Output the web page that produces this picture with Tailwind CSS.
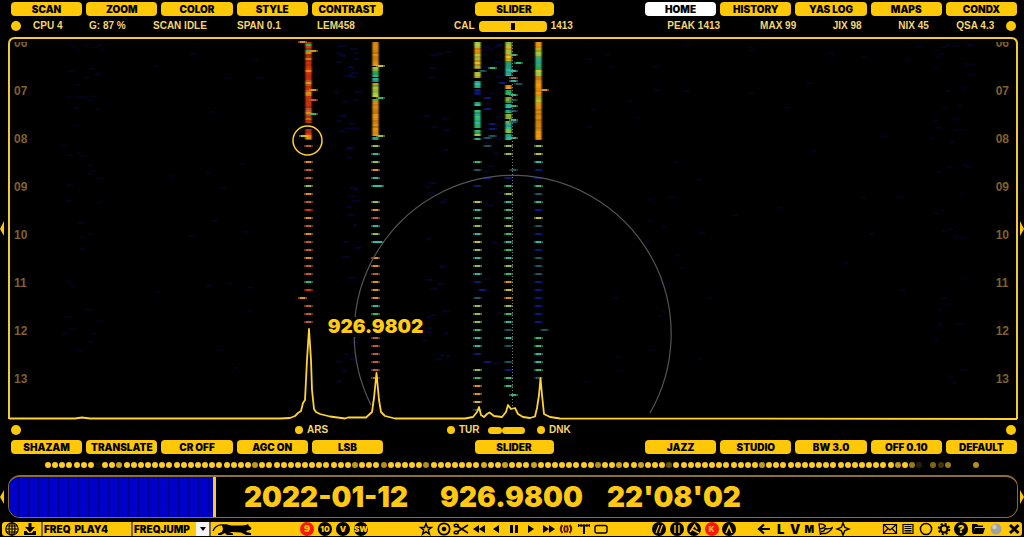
<!DOCTYPE html>
<html lang="en">
<head>
  <meta charset="UTF-8" />
  <meta name="viewport" content="width=device-width, initial-scale=1.0" />
  <title>SDR Spectrum</title>
  <script src="https://cdn.jsdelivr.net/npm/@tailwindcss/browser@4"></script>
</head>
<body class="bg-black min-h-screen flex flex-col overflow-x-hidden font-['Liberation_Sans',sans-serif] text-[#ffcc11]">

  <!-- top buttons -->
  <nav class="flex justify-between pt-[2px] pl-[11px] pr-[7px] text-black font-['Inter',sans-serif] font-black text-[10px] leading-[14px]">
    <div class="grid grid-cols-5 gap-[4px] w-[372px]">
      <button class="h-[14px] rounded bg-[#ffc806]">SCAN</button>
      <button class="h-[14px] rounded bg-[#ffc806]">ZOOM</button>
      <button class="h-[14px] rounded bg-[#ffc806]">COLOR</button>
      <button class="h-[14px] rounded bg-[#ffc806]">STYLE</button>
      <button class="h-[14px] rounded bg-[#ffc806]">CONTRAST</button>
    </div>
    <button class="w-[79px] h-[14px] rounded bg-[#ffc806]">SLIDER</button>
    <div class="grid grid-cols-5 gap-[4px] w-[372px]">
      <button class="h-[14px] rounded bg-white">HOME</button>
      <button class="h-[14px] rounded bg-[#ffc806]">HISTORY</button>
      <button class="h-[14px] rounded bg-[#ffc806]">YAS LOG</button>
      <button class="h-[14px] rounded bg-[#ffc806]">MAPS</button>
      <button class="h-[14px] rounded bg-[#ffc806]">CONDX</button>
    </div>
  </nav>

  <!-- status line -->
  <div class="flex justify-between items-center h-[20px] pl-[11px] pr-[8px] font-bold text-[10px] leading-[12px] text-[#f5d76b]">
    <div class="flex items-center w-[370px]">
      <span class="size-[10px] rounded-full bg-[#ffc806] mr-[12px]"></span>
      <span class="w-[56px]">CPU 4</span>
      <span class="w-[64px]">G: 87 %</span>
      <span class="w-[84px]">SCAN IDLE</span>
      <span class="w-[80px]">SPAN 0.1</span>
      <span>LEM458</span>
    </div>
    <div class="flex items-center gap-[4px]">
      <span>CAL</span>
      <span class="w-[68px] h-[11px] rounded bg-[#ffc806] flex items-center justify-center"><span class="w-[4px] h-[7px] bg-black"></span></span>
      <span>1413</span>
    </div>
    <div class="flex items-center justify-end w-[370px] text-right">
      <span class="w-[76px]">PEAK 1413</span>
      <span class="w-[78px]">MAX 99</span>
      <span class="w-[67px]">JIX 98</span>
      <span class="w-[69px]">NIX 45</span>
      <span class="w-[67px]">QSA 4.3</span>
      <span class="size-[10px] rounded-full bg-[#ffc806] ml-[12px]"></span>
    </div>
  </div>

  <!-- waterfall + spectrum -->
  <main class="relative flex-1 min-h-[386px]">
    <svg id="waterfall" class="absolute inset-0 w-full h-full" viewBox="0 36 1024 386" preserveAspectRatio="none" fill="none">
      <defs>
        <linearGradient id="edge">
          <stop offset="0" stop-color="#000" />
          <stop offset=".3" stop-color="#000" stop-opacity="0" />
          <stop offset=".7" stop-color="#000" stop-opacity="0" />
          <stop offset="1" stop-color="#000" />
        </linearGradient>
      </defs>
      <g id="signal"></g>
      <path d="M512.5 42V408" stroke="#777" stroke-dasharray="1 2" />
      <path d="M371 405A158.500 158.500 0 1 1 650 413" stroke="#555" stroke-width="1.200" />
      <circle cx="307.500" cy="140.500" r="14.500" stroke="#ffd02e" stroke-width="1.500" />
      <path d="M9 419V44q0-6 6-6H1011q6 0 6 6V419" stroke="#f5cb32" stroke-width="2" />
      <path d="M9 418.500H75L82 417.500L90 418.500H280L290 418L295 416L298 413L301 411L303 403L305 400L307 360L309 329L311 360L312 390L314 409L316 412L320 414L330 416.500L345 418.500L348 417.500L366 417.500L372 412L374 398L376.500 373L379 400L381 412L385 416L395 418.500H465L473 417L477 412L479 407L481 415L484 417L487 414L489.500 412.500L494 416L502 417L506 412L508 405L511 409L515 408L518 414L523 417L530 418L535 416.500L537 408L539 395L540.500 378L542 395L544 414L550 417L560 418.500L1017 419" stroke="#ffd42e" stroke-width="1.800" stroke-linejoin="round" />
      <path d="M4 221V236L0 229ZM1020 221V236L1024 229Z" fill="#ffc806" />
    </svg>
    <div class="absolute top-[6px] left-[14px] overflow-hidden">
      <ul class="-mt-[6px] text-[#806128] font-bold text-[12px] leading-[14px]">
        <li class="h-[48px]">06</li><li class="h-[48px]">07</li><li class="h-[48px]">08</li><li class="h-[48px]">09</li>
        <li class="h-[48px]">10</li><li class="h-[48px]">11</li><li class="h-[48px]">12</li><li class="h-[48px]">13</li>
      </ul>
    </div>
    <div class="absolute top-[6px] right-[15px] overflow-hidden">
      <ul class="-mt-[6px] text-[#806128] font-bold text-[12px] leading-[14px]">
        <li class="h-[48px]">06</li><li class="h-[48px]">07</li><li class="h-[48px]">08</li><li class="h-[48px]">09</li>
        <li class="h-[48px]">10</li><li class="h-[48px]">11</li><li class="h-[48px]">12</li><li class="h-[48px]">13</li>
      </ul>
    </div>
    <output class="absolute left-[32%] top-[281px] bg-black font-['Inter',sans-serif] font-black text-[19px] leading-[20px]">926.9802</output>
  </main>

  <!-- station markers -->
  <div class="flex items-center h-[16px] pl-[11px] pr-[8px] font-bold text-[10px] leading-[12px] text-[#f5d76b]">
    <span class="size-[10px] rounded-full bg-[#ffc806]"></span>
    <span class="size-[8px] rounded-full bg-[#ffc806] ml-[274px] mr-[4px]"></span>
    <span class="w-[140px]">ARS</span>
    <span class="size-[8px] rounded-full bg-[#ffc806] mr-[4px]"></span>
    <span class="w-[29px]">TUR</span>
    <span class="w-[14px] h-[7px] rounded-full bg-[#ffc806]"></span>
    <span class="w-[23px] h-[7px] rounded-full bg-[#ffc806]"></span>
    <span class="size-[8px] rounded-full bg-[#ffc806] ml-[12px] mr-[4px]"></span>
    <span>DNK</span>
    <span class="size-[10px] rounded-full bg-[#ffc806] ml-auto"></span>
  </div>

  <!-- bottom buttons -->
  <nav class="flex justify-between pt-[2px] pl-[11px] pr-[7px] text-black font-['Inter',sans-serif] font-black text-[10px] leading-[14px]">
    <div class="grid grid-cols-5 gap-[4px] w-[372px]">
      <button class="h-[14px] rounded bg-[#ffc806]">SHAZAM</button>
      <button class="h-[14px] rounded bg-[#ffc806]">TRANSLATE</button>
      <button class="h-[14px] rounded bg-[#ffc806]">CR OFF</button>
      <button class="h-[14px] rounded bg-[#ffc806]">AGC ON</button>
      <button class="h-[14px] rounded bg-[#ffc806]">LSB</button>
    </div>
    <button class="w-[79px] h-[14px] rounded bg-[#ffc806]">SLIDER</button>
    <div class="grid grid-cols-5 gap-[4px] w-[372px]">
      <button class="h-[14px] rounded bg-[#ffc806]">JAZZ</button>
      <button class="h-[14px] rounded bg-[#ffc806]">STUDIO</button>
      <button class="h-[14px] rounded bg-[#ffc806]">BW 3.0</button>
      <button class="h-[14px] rounded bg-[#ffc806]">OFF 0.10</button>
      <button class="h-[14px] rounded bg-[#ffc806]">DEFAULT</button>
    </div>
  </nav>

  <div id="dots" class="flex justify-between items-center h-[21px] pl-[45px] pr-[43px]"></div>

  <!-- clock bar -->
  <div class="flex items-center justify-between">
    <svg class="w-[4px] h-[14px]" viewBox="0 0 4 14"><path d="M4 0V14L0 7Z" fill="#ffc806" /></svg>
    <div class="flex-1 ml-[4px] mr-[2px] h-[43px] flex items-stretch overflow-hidden rounded-xl border border-t-2 border-[#8c6f32]">
      <div class="w-[204px] bg-[repeating-linear-gradient(90deg,#0000cc_0px,#0000cc_4px,#000088_4px,#000088_5px)]"></div>
      <div class="w-[3px] bg-[#ffcc22]"></div>
      <div class="flex items-center pl-[28px] font-['Inter',sans-serif] font-black text-[28px] leading-[38px] text-[#ffc911]">
        <span class="w-[196px]">2022-01-12</span><span class="w-[167px]">926.9800</span><span>22'08'02</span>
      </div>
    </div>
    <svg class="w-[4px] h-[14px]" viewBox="0 0 4 14"><path d="M0 0V14L4 7Z" fill="#ffc806" /></svg>
  </div>

  <!-- toolbar -->
  <footer class="flex items-center mt-[4px] mb-[1px] mx-[2px] h-[14px] pl-[2px] rounded-[3px] bg-[#ffc806] text-black font-['Inter',sans-serif] font-black text-[10px] leading-[14px]">
    <div class="flex gap-[2px]">
      <button aria-label="Web" class="size-[16px]"><svg viewBox="0 0 16 16" fill="none" stroke="#000" stroke-width="1.200"><circle cx="8" cy="8" r="6.200" /><ellipse cx="8" cy="8" rx="3" ry="6.200" /><path d="M8 2V14M2 8H14M3 5H13M3 11H13" /></svg></button>
      <button aria-label="Download" class="size-[16px]"><svg viewBox="0 0 16 16"><path d="M6.500 2H9.500V6H13L8 11.500L3 6H6.500Z" /><path d="M2 10H4.500L6 12H10L11.500 10H14V14H2Z" /></svg></button>
    </div>
    <input aria-label="Play list" value="FREQ  PLAY4" class="ml-[3px] w-[90px] h-[14px] pl-[1px] border-l-2 border-[#7d6c35] whitespace-pre outline-none" />
    <div class="relative w-[80px] h-[14px] border-x-2 border-[#7d6c35]">
      <select aria-label="Jump mode" class="block w-full h-[14px] pl-[1px] appearance-none outline-none"><option>FREQJUMP</option></select>
      <span class="absolute right-0 top-0 w-[13px] h-[14px] bg-[#f4f4f4] pointer-events-none flex items-center justify-center"><svg class="w-[6px] h-[4px]" viewBox="0 0 6 4"><path d="M0 0H6L3 4Z" /></svg></span>
    </div>
    <svg class="w-[40px] h-[14px] ml-[1px]" viewBox="0 0 40 14"><path d="M1 9C3 4 6 2 12 3" fill="none" stroke="#000" stroke-width="1.200" /><path d="M10 3C13 1.500 16 2.500 19 3.500H30L34 3L36 2L37 4L39.500 6L38.500 8L35 8.500L34 10L39 11V13H34L29 10.500L20 10L17 10L21 11.500V13H15L13 11L9 13H6V11.500L10 10L11 7Z" /></svg>

    <div class="flex justify-between ml-[48px] w-[68px] text-[#ffc806] text-[8px]">
      <button class="size-[14px] rounded-full bg-[#ff1408] text-[9px]">9</button>
      <button class="size-[14px] rounded-full bg-black">10</button>
      <button class="size-[14px] rounded-full bg-black">V</button>
      <button class="size-[14px] rounded-full bg-black flex justify-center">SW</button>
    </div>

    <div class="flex justify-between ml-[50px] w-[191px]">
      <button aria-label="Favourite" class="size-[16px]"><svg viewBox="0 0 16 16" fill="none" stroke="#000" stroke-width="1.400"><path d="M8 2.500L9.500 6.500H13.500L10.300 9L11.500 13.200L8 10.600L4.500 13.200L5.700 9L2.500 6.500H6.500Z" /></svg></button>
      <button aria-label="Record" class="size-[16px]"><svg viewBox="0 0 16 16"><circle cx="8" cy="8" r="5.700" fill="none" stroke="#000" stroke-width="1.700" /><circle cx="8" cy="8" r="2.300" /></svg></button>
      <button aria-label="Cut" class="size-[16px]"><svg viewBox="0 0 16 16" fill="none" stroke="#000" stroke-width="1.500"><path d="M4 5L15 12M4 11L15 4" /><ellipse cx="3.200" cy="4.500" rx="2" ry="1.300" /><ellipse cx="3.200" cy="11.500" rx="2" ry="1.300" /></svg></button>
      <button aria-label="Rewind" class="size-[16px]"><svg viewBox="0 0 16 16"><path d="M8 4V12L2 8ZM14 4V12L8 8Z" /></svg></button>
      <button aria-label="Back" class="size-[16px]"><svg viewBox="0 0 16 16"><path d="M11 4V12L5 8Z" /></svg></button>
      <button aria-label="Pause" class="size-[16px]"><svg viewBox="0 0 16 16"><path d="M4 4H7V12H4ZM9 4H12V12H9Z" /></svg></button>
      <button aria-label="Play" class="size-[16px]"><svg viewBox="0 0 16 16"><path d="M5 4V12L11 8Z" /></svg></button>
      <button aria-label="Forward" class="size-[16px]"><svg viewBox="0 0 16 16"><path d="M2 4V12L8 8ZM8 4V12L14 8Z" /></svg></button>
      <button aria-label="Sound" class="size-[16px]"><svg viewBox="0 0 16 16" fill="none" stroke="#5c1500" stroke-width="1.900"><path d="M4.500 4Q1 8 4.500 12M7.500 4.500Q5 8 7.500 11.500M8.500 4.500Q11 8 8.500 11.500M11.500 4Q15 8 11.500 12" /></svg></button>
      <button aria-label="Antenna" class="size-[16px]"><svg viewBox="0 0 16 16" fill="none" stroke="#000"><path d="M3 4.500H14" stroke-width="1.600" /><path d="M8 3.500V13" stroke-width="2" /><path d="M2.500 3V6M5 3V6M11 3V6M13.500 3V6" /></svg></button>
      <button aria-label="Window" class="size-[16px]"><svg viewBox="0 0 16 16" fill="none" stroke="#000" stroke-width="1.400"><rect x="2" y="4.500" width="12" height="7.500" rx="2" /></svg></button>
    </div>

    <div class="flex justify-between ml-[43px] w-[84px]">
      <button aria-label="Slant" class="size-[14px] rounded-full bg-black"><svg viewBox="0 0 14 14" stroke="#ffc806" stroke-width="1.200"><path d="M4 11L7 3M7.500 11L10.500 3" /></svg></button>
      <button aria-label="Parallel" class="size-[14px] rounded-full bg-black"><svg viewBox="0 0 14 14" stroke="#ffc806" stroke-width="1.400"><path d="M5 3V11M9 3V11" /></svg></button>
      <button aria-label="Auto" class="size-[14px] rounded-full bg-black"><svg viewBox="0 0 14 14" fill="none" stroke="#ffc806" stroke-width="1.500"><path d="M3 10L7.500 3L10 7M5.500 7.500L12 11" /></svg></button>
      <button class="size-[14px] rounded-full bg-[#ff1408] text-[#ffb030] text-[8px]">K</button>
      <button aria-label="Peak" class="size-[14px] rounded-full bg-black"><svg viewBox="0 0 14 14" fill="none" stroke="#ffc806" stroke-width="1.500"><path d="M4 11L7 4L10 11" /></svg></button>
    </div>

    <div class="flex justify-between items-center ml-[20px] w-[95px] text-[13px]">
      <button aria-label="Previous" class="size-[16px]"><svg viewBox="0 0 16 16" fill="none" stroke="#000" stroke-width="2.200"><path d="M14 8H3M8 3.500L3 8L8 12.500" /></svg></button>
      <button class="w-[14px]">L</button>
      <button class="w-[12px]">V</button>
      <button class="w-[13px] text-[10px]">M</button>
      <button aria-label="Flag" class="size-[16px]"><svg viewBox="0 0 16 16" fill="none" stroke="#000" stroke-width="1.300"><path d="M3.500 14L2 3Q6 2.500 8.500 5Q6 8 3 7.500M4 12.500H8.500Q13 11 15.500 6.500Q12 8.500 8 7.500Q8 10.500 4 10.500" /></svg></button>
      <button aria-label="Locate" class="size-[16px]"><svg viewBox="0 0 16 16" fill="none" stroke="#000" stroke-width="1.400"><path d="M8 2L9.700 6.300L14 8L9.700 9.700L8 14L6.300 9.700L2 8L6.300 6.300Z" /></svg></button>
    </div>

    <div class="flex justify-between ml-auto w-[140px]">
      <button aria-label="Mail" class="size-[16px]"><svg viewBox="0 0 16 16" fill="none" stroke="#000" stroke-width="1.200"><path d="M1.500 3.500H14.500V12.500H1.500ZM1.500 3.500L8 9L14.500 3.500M1.500 12.500L6 7.500M14.500 12.500L10 7.500" /></svg></button>
      <button aria-label="List" class="size-[16px]"><svg viewBox="0 0 16 16" fill="none" stroke="#000" stroke-width="1.200"><path d="M3 3.500H13V12.500H3ZM4.500 5.500H11.500M4.500 7.500H11.500M4.500 9.500H11.500M4.500 11H11.500" /></svg></button>
      <button aria-label="Circle" class="size-[16px]"><svg viewBox="0 0 16 16" fill="none" stroke="#000" stroke-width="1.500"><circle cx="8" cy="8" r="5.600" /></svg></button>
      <button aria-label="Settings" class="size-[16px]"><svg viewBox="0 0 16 16" fill="none" stroke="#000"><circle cx="8" cy="8" r="3.500" stroke-width="2.200" /><circle cx="8" cy="8" r="5.300" stroke-width="1.800" stroke-dasharray="2.160 2" /></svg></button>
      <button aria-label="Help" class="size-[14px] mt-[1px] rounded-full bg-black text-[#ffc806] text-[11px]">?</button>
      <button aria-label="Open" class="size-[16px]"><svg viewBox="0 0 16 16"><path d="M2 3H7L8 4.500H13V6H5L3.500 11L2 12Z" /><path d="M5 7H15L13 13H2.500Z" /></svg></button>
      <button aria-label="Status" class="size-[16px]"><svg viewBox="0 0 16 16"><circle cx="8" cy="8" r="5.500" fill="#a2a2a2" /><circle cx="6.500" cy="6" r="2.300" fill="#ccc" /></svg></button>
      <button aria-label="Close" class="size-[16px]"><svg viewBox="0 0 16 16" stroke="#000" stroke-width="3"><path d="M4 4L12.500 12M12.500 4L4 12" /></svg></button>
    </div>
  </footer>

  <script>
    const ns = 'http://www.w3.org/2000/svg';
    const signal = document.getElementById('signal');
    const colors = { r: '#e23a10', o: '#f59a10', y: '#d8cf2c', l: '#9fd04a', g: '#35c878', t: '#2fc5ae', b: '#101a80', d: '#205c66', s: '#d0603a' };

    let seed = 7;
    function rand() {
      seed = (seed * 16807) % 2147483647;
      return seed / 2147483647;
    }

    function rect(x, y, w, h, fill, opacity) {
      const el = document.createElementNS(ns, 'rect');
      el.setAttribute('x', x);
      el.setAttribute('y', y);
      el.setAttribute('width', w);
      el.setAttribute('height', h);
      el.setAttribute('fill', fill);
      if (opacity) el.setAttribute('opacity', opacity);
      signal.appendChild(el);
    }

    function dash(x, y, key) {
      rect(x - 4, y - 1, 9, 2, colors[key], 0.5);
      rect(x - 2, y - 1, 5, 2, colors[key], 0.85);
    }

    // background noise
    [[80, 20, 46], [345, 10, 50], [435, 12, 30], [490, 8, 24], [210, 60, 20], [640, 60, 30], [800, 120, 20], [950, 20, 46]].forEach(([cx, spread, count]) => {
      for (let i = 0; i < count; i++) {
        const y = 44 + Math.pow(rand(), 1.7) * 340;
        rect(cx + (rand() - 0.5) * 2 * spread, y, 4 + rand() * 4, 2, '#0b0b66', cx < 300 || cx > 600 ? 0.25 : 0.42);
      }
    });

    // solid part of each trace: x, then [from, to, palette]
    const traces = [
      [308, [[42, 52, 'rrgo'], [52, 123, 'rrorosr'], [129, 140, 'rsro']]],
      [375, [[42, 66, 'oooo'], [67, 77, 'lggl'], [78, 82, 't'], [83, 97, 'glly'], [99, 104, 'oyl'], [104, 136, 'oooo'], [137, 140, 't']]],
      [477, [[42, 69, 'yolyol'], [72, 78, 'yl'], [81, 88, 'tg'], [89, 95, 'b'], [102, 106, 'tg'], [110, 128, 'gggt'], [130, 136, 'gl'], [138, 140, 't']]],
      [508, [[42, 61, 'oylo'], [61, 76, 'tgtt'], [85, 89, 'yo'], [90, 95, 'tg'], [97, 103, 'gl'], [104, 113, 'tbg'], [114, 119, 'ly'], [121, 133, 'glyt'], [134, 140, 'tg']]],
      [538, [[42, 52, 'ooyo'], [52, 58, 'll'], [58, 70, 'gtg'], [70, 76, 'yl'], [76, 96, 'oo'], [96, 103, 'yy'], [103, 140, 'oooo']]]
    ];
    traces.forEach(([x, parts]) => {
      parts.forEach(([from, to, palette]) => {
        for (let y = from; y < to; y += 2) {
          const key = palette[Math.floor(rand() * palette.length)];
          rect(x - 4, y, 9, Math.min(2, to - y), colors[key], 0.75 + rand() * 0.25);
        }
      });
      rect(x - 4, 42, 9, 99, 'url(#edge)');
    });

    // keyed part, one mark every 8px
    const keyed = [
      [308, 's.osslosrosossossgr.sss'],
      [375, 'ltlott.lostlt.oosoootg..ssssss'],
      [477, '..gd.b.ytgltyltltb.dlllgttb.lgooyd'],
      [508, 'll..bgltgglgtgtlgoyolgtdtd.dbgg'],
      [538, 'lytbbgdtbydbtbdddbbbbbb.ggttgd']
    ];
    keyed.forEach(([x, marks]) => {
      [...marks].forEach((key, i) => {
        if (key !== '.') dash(x, 146 + i * 8, key);
      });
    });

    // stray marks beside the traces
    [[313, 51, 'o'], [313, 90, 'o'], [313, 100, 's'], [313, 114, 'g'], [303, 136, 'y'], [302, 42, 'o'], [380, 66, 'y'], [380, 98, 'g'], [380, 136, 'l'],
     [379, 186, 't'], [379, 242, 't'], [492, 68, 'g'], [482, 71, 'd'], [513, 55, 'g'], [518, 63, 'g'], [513, 71, 't'], [513, 78, 's'], [502, 83, 'b'],
     [513, 81, 't'], [518, 84, 'd'], [513, 95, 'g'], [513, 100, 'd'], [513, 106, 'g'], [513, 111, 'd'], [513, 120, 't'], [513, 122, 'd'], [513, 138, 'g'],
     [487, 98, 'b'], [487, 109, 'b'], [492, 124, 'b'], [492, 129, 'b'], [492, 136, 'd'], [487, 138, 'd'], [487, 146, 'd'], [544, 90, 'o'],
     [513, 170, 'd'], [487, 178, 'b'], [302, 298, 'o'], [544, 330, 'd'], [513, 395, 'g'], [487, 362, 'b'], [482, 290, 'b']].forEach(([x, y, key]) => dash(x, y, key));

    // activity dots
    const dim = { 7: 0.08, 10: 0.8, 29: 0.75, 43: 0.75, 47: 0.7, 53: 0.7, 61: 0.85, 64: 0.8, 68: 0.8, 77: 0.7, 80: 0.8, 83: 0.8, 87: 0.4, 100: 0.75,
      119: 0.75, 121: 0.6, 122: 0.15, 123: 0, 124: 0.5, 125: 0.25, 126: 0.6, 127: 0, 128: 0, 129: 0, 130: 0.7 };
    const dots = document.getElementById('dots');
    for (let i = 0; i <= 130; i++) {
      const dot = document.createElement('span');
      dot.className = 'size-[6px] rounded-full bg-[#ffcc22]';
      dot.style.opacity = i in dim ? dim[i] : 1;
      dots.appendChild(dot);
    }
  </script>
</body>
</html>
